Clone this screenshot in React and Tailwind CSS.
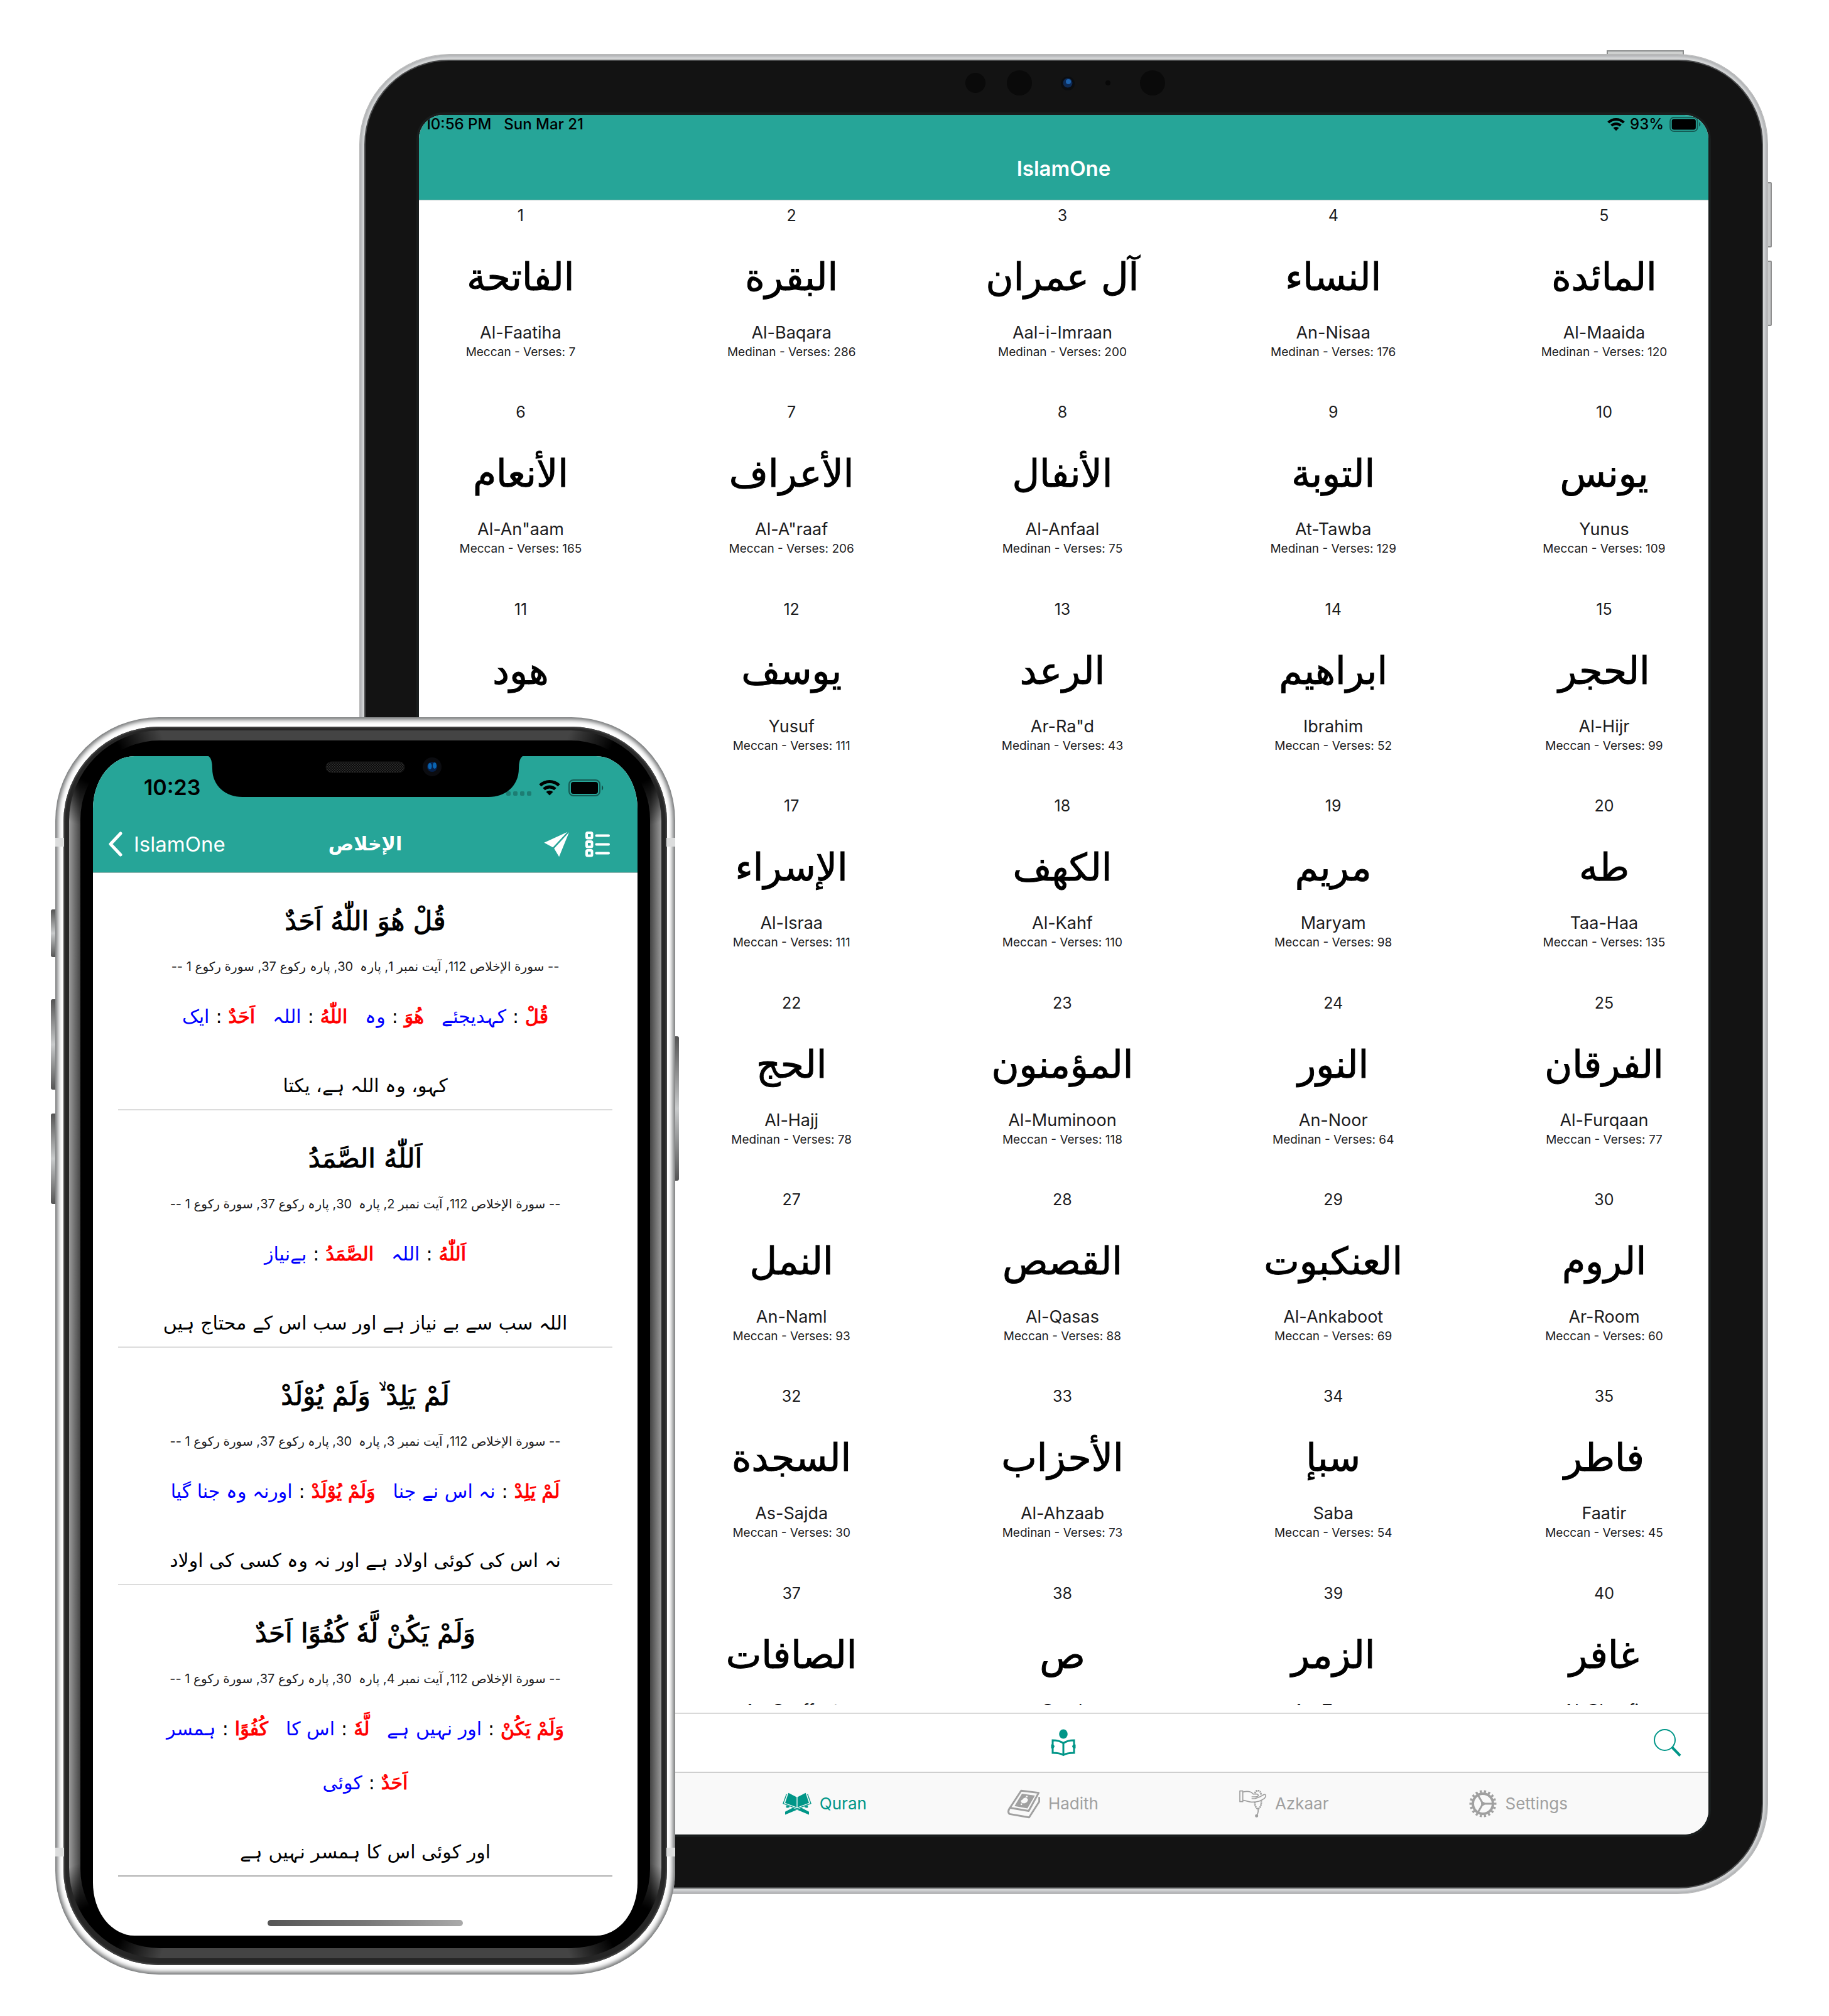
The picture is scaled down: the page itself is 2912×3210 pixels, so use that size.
const SURAHS = [
  [1, 'الفاتحة', 'Al-Faatiha', 'Meccan', 7],
  [2, 'البقرة', 'Al-Baqara', 'Medinan', 286],
  [3, 'آل عمران', 'Aal-i-Imraan', 'Medinan', 200],
  [4, 'النساء', 'An-Nisaa', 'Medinan', 176],
  [5, 'المائدة', 'Al-Maaida', 'Medinan', 120],
  [6, 'الأنعام', 'Al-An"aam', 'Meccan', 165],
  [7, 'الأعراف', 'Al-A"raaf', 'Meccan', 206],
  [8, 'الأنفال', 'Al-Anfaal', 'Medinan', 75],
  [9, 'التوبة', 'At-Tawba', 'Medinan', 129],
  [10, 'يونس', 'Yunus', 'Meccan', 109],
  [11, 'هود'],
  [12, 'يوسف', 'Yusuf', 'Meccan', 111],
  [13, 'الرعد', 'Ar-Ra"d', 'Medinan', 43],
  [14, 'ابراهيم', 'Ibrahim', 'Meccan', 52],
  [15, 'الحجر', 'Al-Hijr', 'Meccan', 99],
  null,
  [17, 'الإسراء', 'Al-Israa', 'Meccan', 111],
  [18, 'الكهف', 'Al-Kahf', 'Meccan', 110],
  [19, 'مريم', 'Maryam', 'Meccan', 98],
  [20, 'طه', 'Taa-Haa', 'Meccan', 135],
  null,
  [22, 'الحج', 'Al-Hajj', 'Medinan', 78],
  [23, 'المؤمنون', 'Al-Muminoon', 'Meccan', 118],
  [24, 'النور', 'An-Noor', 'Medinan', 64],
  [25, 'الفرقان', 'Al-Furqaan', 'Meccan', 77],
  null,
  [27, 'النمل', 'An-Naml', 'Meccan', 93],
  [28, 'القصص', 'Al-Qasas', 'Meccan', 88],
  [29, 'العنكبوت', 'Al-Ankaboot', 'Meccan', 69],
  [30, 'الروم', 'Ar-Room', 'Meccan', 60],
  null,
  [32, 'السجدة', 'As-Sajda', 'Meccan', 30],
  [33, 'الأحزاب', 'Al-Ahzaab', 'Medinan', 73],
  [34, 'سبإ', 'Saba', 'Meccan', 54],
  [35, 'فاطر', 'Faatir', 'Meccan', 45],
  null,
  [37, 'الصافات', 'As-Saaffaat'],
  [38, 'ص', 'Saad'],
  [39, 'الزمر', 'Az-Zumar'],
  [40, 'غافر', 'Al-Ghaafir'],
];

const VERSES = [
  {
    n: 1,
    text: 'قُلْ هُوَ اللّٰهُ اَحَدٌ',
    words: [['قُلْ', 'کہدیجئے'], ['هُوَ', 'وہ'], ['اللّٰهُ', 'اللہ'], ['اَحَدٌ', 'ایک']],
    tr: 'کہو، وہ اللہ ہے، یکتا',
  },
  {
    n: 2,
    text: 'اَللّٰهُ الصَّمَدُ',
    words: [['اَللّٰهُ', 'اللہ'], ['الصَّمَدُ', 'بےنیاز']],
    tr: 'اللہ سب سے بے نیاز ہے اور سب اس کے محتاج ہیں',
  },
  {
    n: 3,
    text: 'لَمْ يَلِدْ ۙ وَلَمْ يُوْلَدْ',
    words: [['لَمْ يَلِدْ', 'نہ اس نے جنا'], ['وَلَمْ يُوْلَدْ', 'اورنہ وہ جنا گیا']],
    tr: 'نہ اس کی کوئی اولاد ہے اور نہ وہ کسی کی اولاد',
  },
  {
    n: 4,
    text: 'وَلَمْ يَكُنْ لَّهٗ كُفُوًا اَحَدٌ',
    words: [['وَلَمْ يَكُنْ', 'اور نہیں ہے'], ['لَّهٗ', 'اس کا'], ['كُفُوًا', 'ہمسر'], ['اَحَدٌ', 'کوئی']],
    tr: 'اور کوئی اس کا ہمسر نہیں ہے',
  },
];

function Wifi({ className }) {
  return (
    <svg viewBox="0 0 34 26" className={className} fill="none" stroke="currentColor" strokeWidth="5">
      <path d="M2 9.5a21.5 21.5 0 0 1 30 0" />
      <path d="M8 15.5a13 13 0 0 1 18 0" />
      <path d="M17 25.5l-5.5-5.5a8 8 0 0 1 11 0z" fill="currentColor" stroke="none" />
    </svg>
  );
}

function Battery({ className }) {
  return (
    <svg viewBox="0 0 56 27" className={className}>
      <rect x="1" y="1" width="49" height="25" rx="7" fill="none" stroke="#000" strokeOpacity=".45" strokeWidth="2" />
      <rect x="4" y="4" width="43" height="19" rx="4" fill="#000" />
      <path d="M53 9.5c3 1 3 7 0 8z" fill="#000" fillOpacity=".5" />
    </svg>
  );
}

function ReaderIcon() {
  return (
    <svg viewBox="0 0 42 44" className="h-[44px] w-[42px]" fill="none" stroke="#009688" strokeWidth="3">
      <ellipse cx="21" cy="8" rx="6.800" ry="7.500" fill="#009688" stroke="none" />
      <path d="M21 22.500C16 19 10 18 4 18v20C10 38 16 38.500 21 41.500 26 38.500 32 38 38 38V18C32 18 26 19 21 22.500z" />
      <path d="M21 22v20" />
      <path d="M2.500 25.500q2-1 3.500 2-1 3-3.500 2.500zM39.500 25.500q-2-1-3.500 2 1 3 3.500 2.500z" fill="#009688" stroke="#009688" strokeWidth="2" />
    </svg>
  );
}

function SearchIcon() {
  return (
    <svg viewBox="0 0 44 44" className="h-[44px] w-[44px]" fill="none" stroke="#009688">
      <circle cx="17.500" cy="17.500" r="16.500" strokeWidth="2" />
      <path d="M29.500 29.500L42 42.500" strokeWidth="4" />
    </svg>
  );
}

function QuranIcon() {
  return (
    <svg viewBox="0 0 138 107" className="h-[36px] w-[46px]" fill="currentColor">
      <path d="M28 2L67 22V70L12 50zM110 2L71 22V70L126 50z" />
      <path d="M19 8L3 52 69 77 135 52 119 8" fill="none" stroke="currentColor" strokeWidth="4" />
      <path d="M12 106V92L48 73 70 82zM126 106V92L90 73 68 82z" />
      <path d="M17 61L36 68 26 73 17 72zM121 61L102 68 112 73 121 72z" />
    </svg>
  );
}

function HadithIcon() {
  return (
    <svg viewBox="0 0 157 140" className="h-[47px] w-[52px]" fill="none" stroke="currentColor" strokeWidth="9" strokeLinejoin="round">
      <path d="M66 6L150 16 102 103 12 88z" />
      <path d="M12 88Q-2 108 10 118L104 134 153 58V36" />
      <path d="M70 20L132 29 96 91 34 80z" fill="currentColor" stroke="none" />
      <path d="M78 42l10-4 8 6 3 6-5 10-10 6-12 0-7-6 1-8 4-2z" fill="#f9f9f9" stroke="none" />
      <circle cx="93" cy="34" r="4" fill="#f9f9f9" stroke="none" />
      <circle cx="67" cy="71" r="4" fill="#f9f9f9" stroke="none" />
    </svg>
  );
}

function AzkaarIcon() {
  return (
    <svg viewBox="0 0 130 132" className="h-[44px] w-[44px]" fill="none" stroke="currentColor" strokeWidth="5" strokeLinejoin="round">
      <path d="M2 5H16V56H2z" />
      <path d="M16 10C30 6 44 6 56 11L66 20H82Q92 22 90 29 84 34 70 33H58" />
      <path d="M16 50C28 50 40 56 56 58 84 60 104 52 120 40 130 28 126 20 118 22L96 34 74 42H58" />
      <path d="M74 16Q78 2 88 4 100 2 104 24M74 58C72 72 80 88 88 92 98 88 106 72 104 52" strokeWidth="8" strokeDasharray="7 3" />
      <path d="M89 92Q92 106 84 120" />
      <circle cx="82" cy="124" r="5" fill="currentColor" />
    </svg>
  );
}

function GearIcon() {
  return (
    <svg viewBox="0 0 44 44" className="h-[44px] w-[44px]" fill="none" stroke="currentColor">
      <circle cx="22" cy="22" r="16" strokeWidth="4" />
      <circle cx="22" cy="22" r="19.500" strokeWidth="4" pathLength="180" strokeDasharray="5 5" strokeDashoffset="2.500" />
      <path d="M22 22H37M22 22L14.500 9M22 22L14.500 35" strokeWidth="3" />
      <circle cx="22" cy="22" r="3" fill="currentColor" stroke="none" />
    </svg>
  );
}

function TabletCamera() {
  return (
    <svg viewBox="0 0 326 42" className="h-[42px] w-[326px]">
      <circle cx="23" cy="21" r="16" fill="#0a0a0a" />
      <circle cx="93" cy="21" r="20" fill="#0a0a0a" />
      <circle cx="170" cy="22" r="11" fill="#0b0d10" />
      <circle cx="170" cy="21" r="7.500" fill="#0d2a55" />
      <circle cx="171" cy="19" r="4" fill="#1d62ad" />
      <circle cx="234" cy="21" r="4" fill="#080808" />
      <circle cx="305" cy="21" r="20" fill="#0a0a0a" />
    </svg>
  );
}

function Tab({ icon, label, active }) {
  return (
    <button className={`flex items-center gap-[13px] text-[26px] leading-[32px] ${active ? 'text-[#009688]' : 'text-[#a0a0a0]'}`}>
      {icon}
      <span>{label}</span>
    </button>
  );
}

function SurahCell({ surah }) {
  const [n, ar, name, place, count] = surah;
  return (
    <button className="flex flex-col items-center text-[#1c1c1e]">
      <span className="pt-[8px] text-[25px] leading-[32px]">{n}</span>
      <span dir="rtl" lang="ar" className="mt-[19px] font-['DejaVu_Sans',sans-serif] text-[60px] leading-[126px] whitespace-nowrap text-black [-webkit-text-stroke:1px_#000]">{ar}</span>
      {name && <span className="pt-[8px] text-[27px] leading-[36px]">{name}</span>}
      {place && <span className="text-[19px] leading-[26px] whitespace-nowrap">{place} - Verses: {count}</span>}
    </button>
  );
}

function Tablet() {
  return (
    <section className="relative col-start-1 row-start-1 mt-[86px] ml-[19.64%] w-[77.03%] self-start">
      <div className="absolute top-[-6px] right-[134px] h-[10px] w-[123px] border-2 border-[#8a8d8d] bg-[#cfd1d0]" />
      <div className="absolute top-[204px] right-[-6px] h-[104px] w-[10px] rounded-[2px] border-2 border-[#8f8f8f] bg-[#c8c9ca]" />
      <div className="absolute top-[329px] right-[-6px] h-[104px] w-[10px] rounded-[2px] border-2 border-[#8f8f8f] bg-[#c8c9ca]" />
      <div className="relative rounded-[144px] border border-[#b9b9b9] bg-[#d6d8d9] px-[7px] py-[8px] shadow-[inset_0_0_4px_4px_#b0b2b4,inset_0_0_1px_6px_#dfe0e1]">
        <div className="rounded-[135px] border-2 border-[#4a4b4c] bg-[#131313] px-[85px] pb-[84px]">
          <div className="flex h-[86px] justify-center pt-[14px]">
            <TabletCamera />
          </div>
          <main className="overflow-hidden rounded-[38px] bg-white shadow-[0_0_0_4px_#191d1d]">
            <header className="flex h-[136px] flex-col border-b border-[#9fb5b2] bg-[#26a598]">
              <div className="flex items-center justify-between pr-[11px] pl-[9px] text-[24px] leading-[30px] font-medium text-black">
                <div className="flex gap-[20px]">
                  <span>10:56 PM</span>
                  <span>Sun Mar 21</span>
                </div>
                <div className="flex items-center gap-[8px]">
                  <Wifi className="h-[22px] w-[28px]" />
                  <span>93%</span>
                  <Battery className="h-[24px] w-[52px]" />
                </div>
              </div>
              <h1 className="pt-[35px] text-center text-[33px] leading-[40px] font-semibold text-white">IslamOne</h1>
            </header>
            <div className="h-[2396px] overflow-hidden">
              <div className="grid h-[2507px] grid-cols-[repeat(5,324px)] grid-rows-8 justify-between pr-[4px]">
                {SURAHS.map((s, i) => (s ? <SurahCell key={i} surah={s} /> : <div key={i} />))}
              </div>
            </div>
            <div className="mt-[12px] grid h-[94px] grid-cols-3 items-center border-t-2 border-[#d9d9d9] px-[43px]">
              <button aria-label="Read" className="col-start-2 justify-self-center"><ReaderIcon /></button>
              <button aria-label="Search" className="justify-self-end"><SearchIcon /></button>
            </div>
            <nav className="flex h-[100px] items-center justify-end gap-[224px] border-t-2 border-[#cfcfcf] bg-[#f9f9f9] pr-[224px]">
              <Tab active icon={<QuranIcon />} label="Quran" />
              <Tab icon={<HadithIcon />} label="Hadith" />
              <Tab icon={<AzkaarIcon />} label="Azkaar" />
              <Tab icon={<GearIcon />} label="Settings" />
            </nav>
          </main>
        </div>
      </div>
    </section>
  );
}

function Notch() {
  return (
    <svg viewBox="0 0 500 66" className="h-[66px] w-[500px]">
      <defs>
        <pattern id="mesh" width="4" height="4" patternUnits="userSpaceOnUse">
          <rect width="4" height="4" fill="#0a0a0a" />
          <rect width="2" height="2" fill="#2c2c2c" />
          <rect x="2" y="2" width="2" height="2" fill="#242424" />
        </pattern>
      </defs>
      <path d="M0 0H500Q494 4 494 20C494 48 472 65 446 65H54C28 65 6 48 6 20Q6 4 0 0z" fill="#000" />
      <rect x="187" y="9" width="125" height="17" rx="8.500" fill="url(#mesh)" stroke="#181818" />
      <circle cx="356" cy="17" r="15" fill="#0b0c10" />
      <circle cx="356" cy="17" r="8" fill="#06204a" />
      <ellipse cx="352.500" cy="16" rx="3" ry="5" fill="#0a63b0" />
      <ellipse cx="360" cy="15" rx="3" ry="5" fill="#0a63b0" />
    </svg>
  );
}

function Verse({ v, last }) {
  return (
    <article dir="rtl" className={`mx-[40px] flex flex-col items-center border-b-2 pt-[32px] ${last ? 'border-[#b0b0b0]' : 'border-[#dcdcdc]'}`}>
      <p lang="ar" className="h-[90px] font-['DejaVu_Sans',sans-serif] text-[42px] leading-[90px] whitespace-nowrap text-black [-webkit-text-stroke:1px_#000]">{v.text}</p>
      <p className="h-[54px] font-['Inter','DejaVu_Sans',sans-serif] text-[20px] leading-[54px] whitespace-pre text-[#1c1c1e]">
        {`-- سورة الإخلاص 112, آیت نمبر ${v.n}, پارہ  30, پارہ رکوع 37, سورة رکوع 1 --`}
      </p>
      <div className="mt-[10px] flex flex-wrap justify-center gap-x-[28px] px-[40px] font-['DejaVu_Sans',sans-serif] text-[30px] leading-[86px]">
        {v.words.map(([a, u], i) => (
          <span key={i} className="flex gap-[10px] whitespace-nowrap">
            <span className="text-[#ff0000] [-webkit-text-stroke:1px_#ff0000]">{a}</span>
            <span className="text-black">:</span>
            <span className="text-[#0000ff]">{u}</span>
          </span>
        ))}
      </div>
      <p lang="ur" className="mt-[34px] h-[70px] font-['DejaVu_Sans',sans-serif] text-[30px] leading-[66px] whitespace-nowrap text-black">{v.tr}</p>
    </article>
  );
}

function Phone() {
  return (
    <section className="relative col-start-1 row-start-1 mt-[1142px] ml-[3.02%] w-[33.9%] self-start">
      <div className="absolute top-[306px] left-[-7px] h-[76px] w-[12px] rounded-[3px] bg-linear-to-b from-[#555] via-[#c9cbcc] to-[#555]" />
      <div className="absolute top-[449px] left-[-7px] h-[144px] w-[12px] rounded-[3px] bg-linear-to-b from-[#555] via-[#c9cbcc] to-[#555]" />
      <div className="absolute top-[631px] left-[-7px] h-[144px] w-[12px] rounded-[3px] bg-linear-to-b from-[#555] via-[#c9cbcc] to-[#555]" />
      <div className="absolute top-[508px] right-[-6px] h-[230px] w-[12px] rounded-[3px] bg-linear-to-b from-[#555] via-[#c9cbcc] to-[#555]" />
      <div className="relative rounded-[165px] bg-white px-[13px] py-[15px] shadow-[inset_0_0_7px_4px_#6d6f70]">
        <div className="absolute top-[192px] left-0 h-[14px] w-[14px] bg-[#dcdddd]" />
        <div className="absolute top-[192px] right-0 h-[14px] w-[14px] bg-[#dcdddd]" />
        <div className="absolute bottom-[188px] left-0 h-[14px] w-[14px] bg-[#dcdddd]" />
        <div className="absolute right-0 bottom-[188px] h-[14px] w-[14px] bg-[#dcdddd]" />
        <div className="rounded-[152px] bg-[#262626] px-[9px] pt-[6px] pb-[11px] shadow-[inset_0_0_2px_2px_#444]">
          <div className="rounded-[144px] bg-[#444] bg-[radial-gradient(circle_at_44px_44px,#000_40px,transparent_110px),radial-gradient(circle_at_calc(100%-44px)_44px,#000_40px,transparent_110px),radial-gradient(circle_at_44px_calc(100%-44px),#000_40px,transparent_110px),radial-gradient(circle_at_calc(100%-44px)_calc(100%-44px),#000_40px,transparent_110px),linear-gradient(to_right,#999,#444_18px,#444_calc(100%-18px),#999)] px-[18px] py-[16px]">
            <div className="rounded-[126px] bg-black px-[20px] pt-[25px] pb-[20px]">
              <main className="relative overflow-hidden bg-white [border-radius:66px/84px]">
                <div className="absolute inset-x-0 top-0 flex justify-center"><Notch /></div>
                <header className="flex h-[186px] flex-col border-b border-[#9fb5b2] bg-[#26a598]">
                  <div className="flex h-[96px] items-center justify-between pt-[4px] pr-[54px] pl-[81px]">
                    <span className="text-[34px] leading-[40px] font-semibold text-black">10:23</span>
                    <span className="flex items-center">
                      <svg viewBox="0 0 40 7" className="mt-[18px] mr-[12px] h-[7px] w-[40px]" fill="#1d7d73">
                        <rect width="7" height="7" rx="2" />
                        <rect x="11" width="7" height="7" rx="2" />
                        <rect x="22" width="7" height="7" rx="2" />
                        <rect x="33" width="7" height="7" rx="2" />
                      </svg>
                      <Wifi className="mr-[13px] h-[26px] w-[34px]" />
                      <Battery className="h-[27px] w-[56px]" />
                    </span>
                  </div>
                  <div className="grid h-[88px] grid-cols-3 items-center pr-[44px] pl-[24px] text-white">
                    <button className="flex items-center gap-[17px] text-[33px] leading-[40px]">
                      <svg viewBox="0 0 24 40" className="h-[40px] w-[24px]" fill="none" stroke="currentColor" strokeWidth="5" strokeLinecap="round" strokeLinejoin="round">
                        <path d="M20 3L4 20 20 37" />
                      </svg>
                      IslamOne
                    </button>
                    <h2 lang="ar" className="pl-[20px] text-center font-['DejaVu_Sans',sans-serif] text-[30px] leading-[40px] font-bold">الإخلاص</h2>
                    <div className="flex items-center justify-end gap-[25px]">
                      <button aria-label="Go to verse">
                        <svg viewBox="0 0 122 124" className="h-[41px] w-[41px]" fill="currentColor">
                          <path d="M0 54L112 2 42 76zM120 4L72 122 48 82z" />
                        </svg>
                      </button>
                      <button aria-label="Display options">
                        <svg viewBox="0 0 39 41" className="h-[41px] w-[39px]" fill="none" stroke="currentColor" strokeWidth="4">
                          <rect x="2" y="2" width="8.500" height="8.500" rx="1.500" />
                          <rect x="2" y="16" width="8.500" height="8.500" rx="1.500" />
                          <rect x="2" y="30" width="8.500" height="8.500" rx="1.500" />
                          <path d="M17.500 6.500H37M17.500 20.500H37M17.500 34.500H37" strokeLinecap="round" />
                        </svg>
                      </button>
                    </div>
                  </div>
                </header>
                {VERSES.map((v) => (
                  <Verse key={v.n} v={v} last={v.n === 4} />
                ))}
                <div className="flex h-[94px] items-end justify-center pb-[15px]">
                  <div className="h-[10px] w-[311px] rounded-full bg-linear-to-r from-[#555] via-[#777] to-[#aaa]" />
                </div>
              </main>
            </div>
          </div>
        </div>
      </div>
    </section>
  );
}

export default function App() {
  return (
    <div className="grid w-full grid-cols-1 bg-white pb-[66px] font-['Inter',sans-serif]">
      <Tablet />
      <Phone />
    </div>
  );
}
